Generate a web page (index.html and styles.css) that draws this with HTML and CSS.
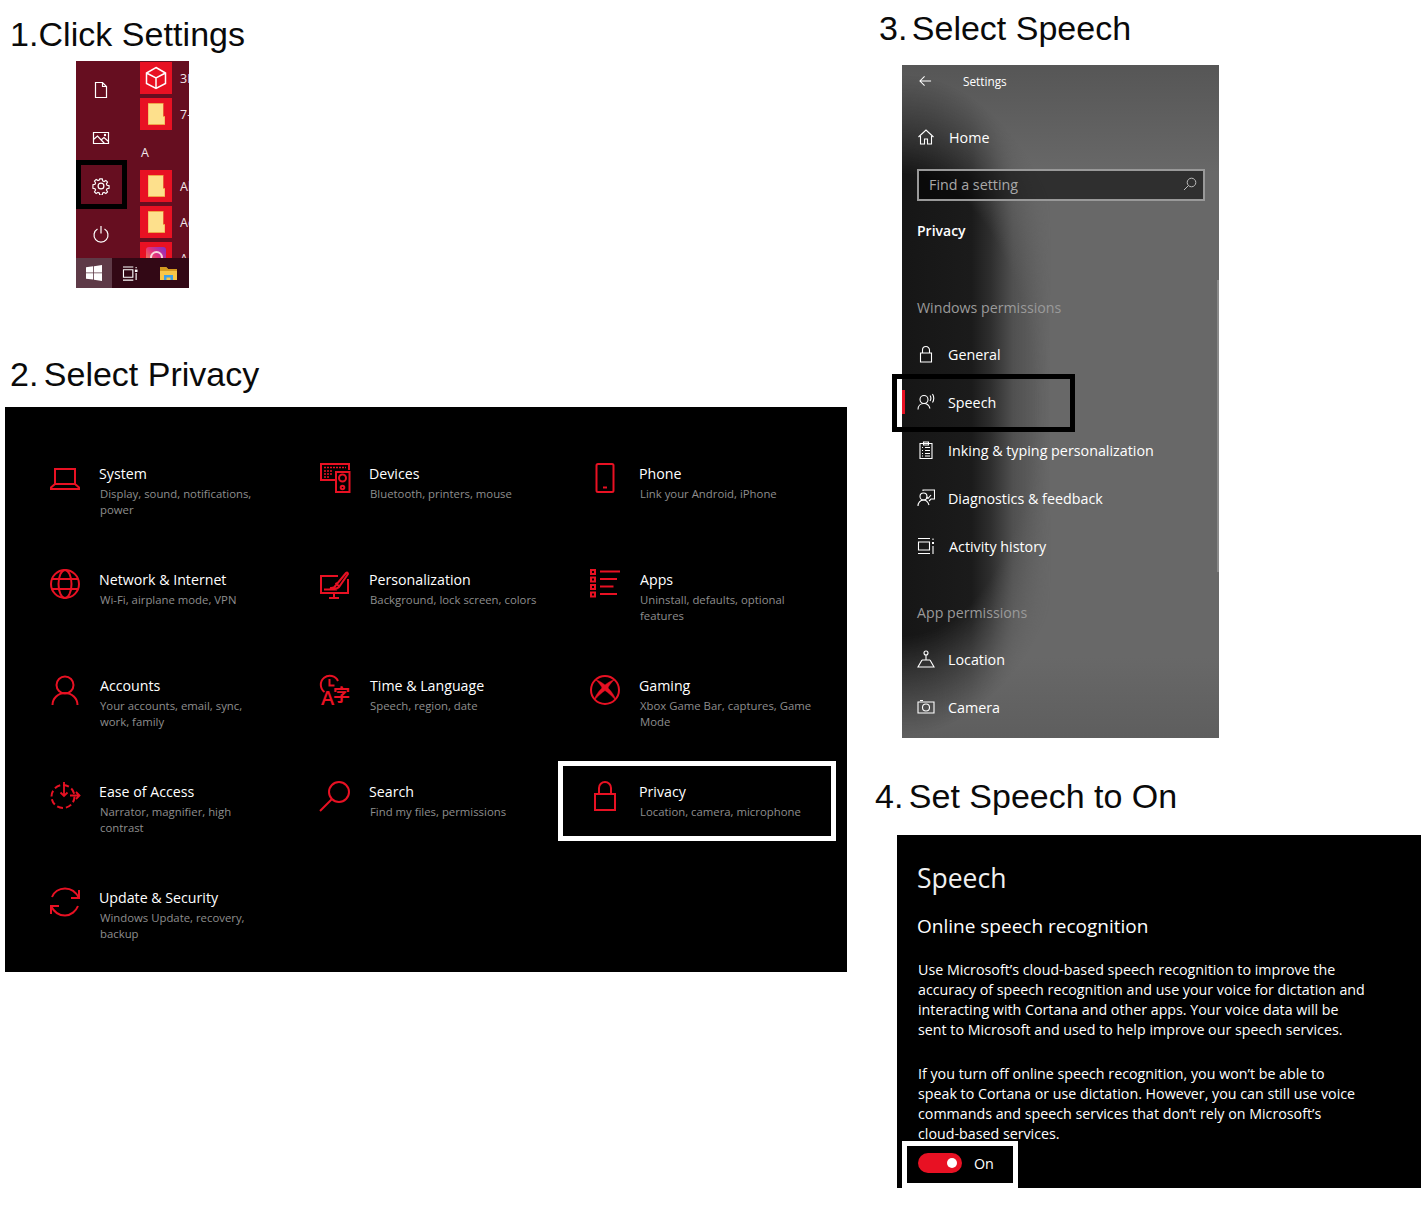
FILE: index.html
```html
<!DOCTYPE html>
<html lang="en">
<head>
<meta charset="utf-8">
<title>Turn on online speech recognition</title>
<link rel="stylesheet" href="styles.css">
</head>
<body>
<main class="page">
  <section class="col-left">
    <h2 class="step step-1">1.Click Settings</h2>
    <div class="start">
      <div class="start-body">
        <div class="start-rail">
          <div class="rail-btn"><svg class="rail-icon" viewBox="0 0 18 18"><path d="M3.500 1.500h7l4 4v11h-11zM10.500 1.500v4h4"/></svg></div>
          <div class="rail-btn"><svg class="rail-icon" viewBox="0 0 18 18"><path d="M1.500 3.500h15v11h-15zM1.500 10.500l4-3.500 7 7.500M9 11l3-2.500 4.500 4"/><circle cx="13" cy="6" r=".6"/></svg></div>
          <div class="rail-btn"><svg class="rail-icon" viewBox="0 0 18 18"><path d="M7.700 1.500h2.600l.5 2.200 1.400.6 1.900-1.200 1.800 1.800-1.200 1.900.6 1.400 2.200.5v2.600l-2.200.5-.6 1.400 1.200 1.900-1.800 1.800-1.900-1.200-1.400.6-.5 2.200H7.700l-.5-2.200-1.400-.6-1.900 1.200-1.800-1.800 1.200-1.900-.6-1.400-2.200-.5V7.700l2.200-.5.6-1.400-1.200-1.900 1.800-1.800 1.900 1.200 1.400-.6z" transform="translate(.45 .45) scale(.95)"/><circle cx="9" cy="9" r="2.900"/></svg></div>
          <div class="rail-btn"><svg class="rail-icon" viewBox="0 0 18 18"><path d="M5.500 4a7 7 0 1 0 7 0M9 1v7.500"/></svg></div>
        </div>
        <div class="start-list">
          <div class="app"><span class="tile"><svg class="tile-cube" viewBox="0 0 24 24"><path d="M12 1.500l9.500 5.500v10.500L12 22.500 2.500 17.500V7zM2.500 7l9.500 5 9.500-5M12 12v10.500"/></svg></span><span class="app-name">3D</span></div>
          <div class="app"><span class="tile"><svg class="folder" viewBox="0 0 17 22"><path class="folder-edge" d="M0 0h15.500v13H17v9H0z"/><path class="folder-page" d="M.5 1h14.500v13h1.500v7H.5z"/></svg></span><span class="app-name">7-</span></div>
          <div class="app-letter">A</div>
          <div class="app"><span class="tile"><svg class="folder" viewBox="0 0 17 22"><path class="folder-edge" d="M0 0h15.500v13H17v9H0z"/><path class="folder-page" d="M.5 1h14.500v13h1.500v7H.5z"/></svg></span><span class="app-name">Al</span></div>
          <div class="app"><span class="tile"><svg class="folder" viewBox="0 0 17 22"><path class="folder-edge" d="M0 0h15.500v13H17v9H0z"/><path class="folder-page" d="M.5 1h14.500v13h1.500v7H.5z"/></svg></span><span class="app-name">Ad</span></div>
          <div class="app"><span class="tile tile-top"><span class="insta"><span class="insta-ring"></span></span></span><span class="app-name">A</span></div>
        </div>
      </div>
      <div class="taskbar">
        <div class="task-start"><svg class="win-logo" viewBox="0 0 16 16"><path d="M0 2.300l7.200-1v6.200H0zM8 1.200L16 0v7.500H8zM0 8.300h7.200v6.300L0 13.700zM8 8.300h8V16l-8-1.200z"/></svg></div>
        <div class="task-view"><svg class="task-icon" viewBox="0 0 18 16"><path d="M1 1h11M1 15h11M1.500 4h10v8h-10zM15 1v1.500M15 7.500V15"/><rect x="13.700" y="3.800" width="2.800" height="2.600" class="task-dot"/></svg></div>
        <div class="task-files"><svg class="task-folder" viewBox="0 0 17 15"><path class="f-back" d="M0 1h6l2 2h9v11H0z"/><path class="f-top" d="M0 1h6l2 2h9v2H0z"/><path class="f-blue" d="M4 9h9v5h-2.500v-2.500h-4V14H4z"/></svg></div>
      </div>
      <div class="mark-dark mark-settings"></div>
    </div>

    <h2 class="step step-2"><span class="num num-2">2. </span>Select Privacy</h2>
    <div class="settings">
      <div class="tile-grid">
        <div class="item">
          <svg class="ic" viewBox="0 0 30 30"><path d="M5 6h20v15H5zM5 21l-4 3.500v1.500h28v-1.500L25 21"/></svg>
          <div class="item-text"><div class="item-title">System</div><div class="item-sub">Display, sound, notifications,<br>power</div></div>
        </div>
        <div class="item">
          <svg class="ic" viewBox="0 0 30 30"><path d="M15 17H1V1h28v6"/><path d="M16 9h13.500v20H16z"/><circle cx="22.500" cy="15" r="3.500"/><circle cx="22.500" cy="24.500" r="1.800"/><path class="ic-thin" d="M4 4.500h22M4 8h8M4 11h8M4 14h5" stroke-dasharray="2 1"/></svg>
          <div class="item-text"><div class="item-title">Devices</div><div class="item-sub">Bluetooth, printers, mouse</div></div>
        </div>
        <div class="item">
          <svg class="ic" viewBox="0 0 30 30"><rect x="6.500" y="1" width="17" height="28" rx="1.500"/><path d="M13 24.500h4"/></svg>
          <div class="item-text"><div class="item-title">Phone</div><div class="item-sub">Link your Android, iPhone</div></div>
        </div>
        <div class="item">
          <svg class="ic" viewBox="0 0 30 30"><circle cx="15" cy="15" r="14"/><ellipse cx="15" cy="15" rx="6.500" ry="14"/><path d="M2 10h26M2 20h26"/></svg>
          <div class="item-text"><div class="item-title">Network &amp; Internet</div><div class="item-sub">Wi-Fi, airplane mode, VPN</div></div>
        </div>
        <div class="item">
          <svg class="ic" viewBox="0 0 30 30"><path d="M18 7H1v17h27V10M14 24v5M9 29h10"/><path d="M10 19c3 .5 5-1 6-3l10-12c1-1 2-.5 2 1l-9 13c-2 2-6 2.500-9 1zM15.500 14l3.500 3M4 20.500h13"/></svg>
          <div class="item-text"><div class="item-title">Personalization</div><div class="item-sub">Background, lock screen, colors</div></div>
        </div>
        <div class="item">
          <svg class="ic" viewBox="0 0 30 30"><path d="M1 1h4v4H1zM1 8.500h4v4H1zM1 16h4v4H1zM1 23.500h4v4H1zM10 2.500h20M10 10h17M10 17.500h13.500M10 25h17"/></svg>
          <div class="item-text"><div class="item-title title-shift">Apps</div><div class="item-sub">Uninstall, defaults, optional<br>features</div></div>
        </div>
        <div class="item">
          <svg class="ic" viewBox="0 0 30 30"><circle cx="15" cy="10" r="8.500"/><path d="M2.500 30a12.500 12 0 0 1 25 0"/></svg>
          <div class="item-text"><div class="item-title title-shift">Accounts</div><div class="item-sub">Your accounts, email, sync,<br>work, family</div></div>
        </div>
        <div class="item">
          <svg class="ic" viewBox="0 0 30 30"><path d="M4.500 17A9 9 0 1 1 18 6M9.500 4v6.500h5"/><text x="1" y="30" class="ic-glyph">A</text><text x="13" y="26" class="ic-cjk">字</text></svg>
          <div class="item-text"><div class="item-title title-shift">Time &amp; Language</div><div class="item-sub">Speech, region, date</div></div>
        </div>
        <div class="item">
          <svg class="ic" viewBox="0 0 30 30"><circle cx="15" cy="15" r="14"/><path class="ic-fill" d="M6 5C9 5.500 12.500 8 15 10 17.500 8 21 5.500 24 5 21 8 18.500 11 18 13 21 16 25 21 25.500 25 22 21 18 17.500 15 15.500 12 17.500 8 21 4.500 25 5 21 9 16 12 13 11.500 11 9 8 6 5z"/></svg>
          <div class="item-text"><div class="item-title">Gaming</div><div class="item-sub">Xbox Game Bar, captures, Game<br>Mode</div></div>
        </div>
        <div class="item">
          <svg class="ic" viewBox="0 0 30 30"><circle class="ic-dash" cx="13" cy="15.500" r="11.500"/><path class="ic-arrow" d="M14 1v14M10.500 11.500l3.500 3.500 3.500-3.500M20 14.500h9.500M26 11l3.500 3.500-3.500 3.500"/></svg>
          <div class="item-text"><div class="item-title">Ease of Access</div><div class="item-sub">Narrator, magnifier, high<br>contrast</div></div>
        </div>
        <div class="item">
          <svg class="ic" viewBox="0 0 30 30"><circle cx="19" cy="11" r="10"/><path d="M12 18L0 30"/></svg>
          <div class="item-text"><div class="item-title">Search</div><div class="item-sub">Find my files, permissions</div></div>
        </div>
        <div class="item">
          <svg class="ic" viewBox="0 0 30 30"><path d="M5 13h20v16H5zM9 13V7a6 6 0 0 1 12 0v6"/></svg>
          <div class="item-text"><div class="item-title">Privacy</div><div class="item-sub">Location, camera, microphone</div></div>
        </div>
        <div class="item">
          <svg class="ic" viewBox="0 0 30 30"><path d="M2 10C4 5 9 1.500 15 1.500S26 5 29 11M29 3v8h-8M28 19c-2 5-7 9.500-13 9.500S4 25 1 19M1 27v-8h8"/></svg>
          <div class="item-text"><div class="item-title">Update &amp; Security</div><div class="item-sub">Windows Update, recovery,<br>backup</div></div>
        </div>
      </div>
      <div class="mark-light mark-privacy"></div>
    </div>
  </section>

  <section class="col-right">
    <h2 class="step step-3"><span class="num num-3">3. </span>Select Speech</h2>
    <div class="sidebar">
      <div class="side-head">
        <svg class="back" viewBox="0 0 14 12"><path d="M13 6H1M6 1L1 6l5 5"/></svg>
        <span class="side-name">Settings</span>
      </div>
      <div class="row row-home">
        <svg class="nav-ic" viewBox="0 0 18 18"><path d="M1.500 9L9 2l7.500 7M3.500 8v8h4v-5h3v5h4V8"/></svg>
        <span>Home</span>
      </div>
      <div class="find">
        <span class="find-text">Find a setting</span>
        <svg class="find-ic" viewBox="0 0 14 14"><circle cx="8.500" cy="5.500" r="4.300"/><path d="M5.500 8.500L1 13"/></svg>
      </div>
      <div class="side-title">Privacy</div>
      <div class="side-label label-win">Windows permissions</div>
      <div class="row">
        <svg class="nav-ic" viewBox="0 0 18 18"><path d="M3.500 8h11v9h-11zM5.500 8V5a3.500 3.500 0 0 1 7 0v3"/></svg>
        <span>General</span>
      </div>
      <div class="row row-active">
        <svg class="nav-ic" viewBox="0 0 18 18"><circle cx="7" cy="6.500" r="4"/><path d="M1 16.500c0-3.500 2.500-6 6-6s5 1.500 6 5M13 2.500c1 1.500 1 4 0 5.500M15.500 1c1.500 2.500 1.500 6 0 8.500"/></svg>
        <span>Speech</span>
      </div>
      <div class="row">
        <svg class="nav-ic" viewBox="0 0 18 18"><path d="M3 2.500h12v15H3zM6.500 1h5v3h-5zM5 6.500h1M8 6.500h5M5 9.500h1M8 9.500h5M5 12.500h1M8 12.500h5M5 15h1M8 15h5"/></svg>
        <span>Inking &amp; typing personalization</span>
      </div>
      <div class="row">
        <svg class="nav-ic" viewBox="0 0 18 18"><circle cx="6.500" cy="7.500" r="3.500"/><path d="M1 17c0-3 2-6 5.500-6s4.500 2 5.500 5M6 2V1h11.500v9H14l-2 2M9.500 8l1.500 1.500L14 6"/></svg>
        <span>Diagnostics &amp; feedback</span>
      </div>
      <div class="row row-activity">
        <svg class="nav-ic" viewBox="0 0 18 18"><path d="M1 1.500h12M1 16.500h12M1.500 5h11v8h-11zM16 1.500v1.500M16 9v8"/><rect x="15" y="5" width="2" height="2" class="nav-dot"/></svg>
        <span>Activity history</span>
      </div>
      <div class="side-label label-app">App permissions</div>
      <div class="row">
        <svg class="nav-ic" viewBox="0 0 18 18"><circle cx="9" cy="3" r="2"/><path d="M9 5v5M5 10h8M5 10L1 17h16l-4-7"/></svg>
        <span>Location</span>
      </div>
      <div class="row">
        <svg class="nav-ic" viewBox="0 0 18 18"><path d="M1 4h16v11H1zM3 2.500h3"/><circle cx="9" cy="9.500" r="3.500"/></svg>
        <span>Camera</span>
      </div>
      <div class="scroll"></div>
      <div class="mark-dark mark-speech"></div>
    </div>

    <h2 class="step step-4"><span class="num num-4">4. </span>Set Speech to On</h2>
    <div class="speech">
      <h3 class="speech-title">Speech</h3>
      <h4 class="speech-sub">Online speech recognition</h4>
      <p class="speech-p">Use Microsoft’s cloud-based speech recognition to improve the<br>accuracy of speech recognition and use your voice for dictation and<br>interacting with Cortana and other apps. Your voice data will be<br>sent to Microsoft and used to help improve our speech services.</p>
      <p class="speech-p speech-p2">If you turn off online speech recognition, you won’t be able to<br>speak to Cortana or use dictation. However, you can still use voice<br>commands and speech services that don’t rely on Microsoft’s<br>cloud-based services.</p>
      <div class="toggle-row">
        <span class="toggle"><span class="knob"></span></span>
        <span class="toggle-label">On</span>
      </div>
      <div class="mark-light mark-toggle"></div>
    </div>
  </section>
</main>
</body>
</html>
```

FILE: styles.css
```css
* { box-sizing: border-box; }
html, body { margin: 0; padding: 0; background: #fff; }
body { height: 1226px; overflow: hidden; font-family: "Open Sans", "Noto Sans", sans-serif; }
.page { display: flex; align-items: flex-start; }
.col-left { width: 875px; padding-top: 14px; flex: none; }
.col-right { width: 549px; padding-top: 8px; flex: none; }

.step { margin: 0; font: 400 34px/40px "Liberation Sans", Arial, sans-serif; height: 40px; color: #0a0a0a; white-space: nowrap; }
.step-1 { margin-left: 10px; letter-spacing: .05px; }
.step-2 { margin: 66px 0 0 10px; }
.step-3 { margin-left: 4px; }
.step-4 { margin: 38px 0 0 0; }
.num-2 { word-spacing: -4px; }
.num-3 { word-spacing: -5px; }
.num-4 { word-spacing: -4px; }

/* start menu */
.start { position: relative; width: 113px; height: 227px; margin: 7px 0 0 76px; background: #660e20; color: #fff; }
.start-body { display: flex; height: 197px; overflow: hidden; }
.start-rail { width: 64px; padding-top: 5px; flex: none; }
.rail-btn { height: 48px; width: 50px; display: flex; align-items: center; justify-content: center; }
.rail-icon { width: 18px; height: 18px; fill: none; stroke: #fff; stroke-width: 1.2; }
.start-list { width: 49px; overflow: hidden; padding-top: 1px; flex: none; }
.app { display: flex; align-items: center; height: 32px; margin-bottom: 4px; width: 60px; }
.tile { width: 32px; height: 32px; background: #e81123; display: flex; align-items: center; justify-content: center; flex: none; }
.tile-top { align-items: flex-start; }
.tile-cube { width: 24px; height: 24px; fill: none; stroke: #fff; stroke-width: 1.5; }
.folder { width: 17px; height: 22px; }
.folder-edge { fill: #f0a54a; }
.folder-page { fill: #fde08c; }
.insta { width: 20px; height: 20px; margin-top: 5px; border-radius: 3px; background: linear-gradient(45deg, #f6a13d, #e0307c 55%, #7a2fd0); display: flex; align-items: center; justify-content: center; }
.insta-ring { width: 13px; height: 13px; border-radius: 50%; border: 2px solid #f7d7dd; }
.app-name { font-size: 12.500px; margin-left: 8px; white-space: nowrap; color: #f2e8ea; }
.app-letter { height: 36px; line-height: 40px; font-size: 12.500px; color: #f2e8ea; margin-top: -1px; margin-bottom: 1px; padding-left: 1px; }
.taskbar { display: flex; height: 30px; background: #320815; }
.task-start { width: 36px; display: flex; align-items: center; justify-content: center; background: #5e3a47; }
.win-logo { width: 16px; height: 16px; fill: #fff; }
.task-view { width: 36px; display: flex; align-items: center; justify-content: center; }
.task-icon { width: 17px; height: 15px; fill: none; stroke: #fff; stroke-width: 1.2; }
.task-dot { fill: #fff; stroke: none; }
.task-files { width: 41px; display: flex; align-items: center; justify-content: center; }
.task-folder { width: 17px; height: 15px; }
.f-back { fill: #f7c648; }
.f-top { fill: #d59a20; }
.f-blue { fill: #3ea0e6; }

.mark-dark { position: absolute; border: 5px solid #000; }
.mark-light { position: absolute; border: 5px solid #fff; }
.mark-settings { left: 0; top: 99px; width: 51px; height: 49px; }

/* settings grid */
.settings { position: relative; width: 842px; height: 565px; margin: 13px 0 0 5px; background: #000; color: #fff; padding: 56px 0 0 45px; }
.tile-grid { display: grid; grid-template-columns: repeat(3, 270px); grid-auto-rows: 106px; }
.item { display: flex; gap: 19px; }
.ic { width: 30px; height: 30px; flex: none; fill: none; stroke: #e81123; stroke-width: 2; overflow: visible; }
.ic-thin { stroke-width: 1.5; }
.ic-fill { fill: #e81123; stroke: #e81123; stroke-width: .5; stroke-linejoin: round; }
.ic-dash { stroke-dasharray: 6 3; }
.ic-arrow { stroke-width: 1.800; }
.ic-glyph { font: 600 20px "Open Sans", sans-serif; fill: #e81123; stroke: none; }
.ic-cjk { font: 700 17px "Noto Sans CJK SC", sans-serif; fill: #e81123; stroke: none; }
.item-text { white-space: nowrap; padding-top: 1px; }
.item-title { font-size: 14.200px; line-height: 20px; color: #fff; }
.title-shift { padding-left: 1px; }
.item-sub { font-size: 11.350px; line-height: 16px; color: #8e8e8e; margin: 2px 0 0 1px; }
.mark-privacy { left: 553px; top: 354px; width: 278px; height: 80px; }

/* sidebar */
.sidebar { position: relative; isolation: isolate; width: 317px; height: 673px; margin: 17px 0 0 27px; color: #fff;
  background: linear-gradient(180deg, #565656 0, #686868 16%, #686868 88%, #5e5e5e 100%); }
.sidebar::before { content: ""; position: absolute; z-index: -1; inset: 0;
  background: linear-gradient(90deg, #161616 0, #1b1b1b 22%, #2e2e2e 28%, #505050 35%, rgba(104,104,104,0) 47%);
  -webkit-mask-image: radial-gradient(ellipse 190px 330px at 0 340px, #000 70%, transparent 100%);
  mask-image: radial-gradient(ellipse 190px 330px at 0 340px, #000 70%, transparent 100%); }
.side-head { height: 32px; display: flex; align-items: center; padding-left: 17px; }
.back { width: 13px; height: 12px; fill: none; stroke: #fff; stroke-width: 1.1; }
.side-name { font-size: 11.800px; margin-left: 31px; }
.row { position: relative; height: 48px; display: flex; align-items: center; padding-left: 15px; font-size: 14.300px; gap: 13px; }
.row-home { margin-top: 16px; gap: 14px; }
.row-activity { gap: 14px; }
.nav-ic { width: 18px; height: 18px; flex: none; fill: none; stroke: #fff; stroke-width: 1.1; }
.nav-dot { fill: #fff; stroke: none; }
.find { display: flex; align-items: center; justify-content: space-between; width: 288px; height: 32px; margin: 8px 0 0 15px; padding: 0 6px 2px 10px; border: 2px solid #999; background: rgba(0,0,0,.55); }
.find-text { font-size: 14.300px; color: #a8a8a8; }
.find-ic { width: 14px; height: 14px; fill: none; stroke: #bbb; stroke-width: 1; }
.side-title { margin: 20px 0 0 15px; height: 20px; line-height: 20px; font-size: 14px; font-weight: 600; }
.side-label { margin-left: 15px; height: 20px; line-height: 20px; font-size: 14.200px; color: #9a9a9a; margin-bottom: 12px; }
.label-win { margin-top: 57px; }
.label-app { margin-top: 33px; }
.row-active::before { content: ""; position: absolute; left: 0; top: 12px; width: 3px; height: 24px; background: #e81123; }
.scroll { position: absolute; right: 0; top: 215px; width: 2px; height: 292px; background: #8a8a8a; }
.mark-speech { left: -10px; top: 309px; width: 183px; height: 58px; }

/* speech */
.speech { position: relative; width: 524px; height: 353px; margin: 19px 0 0 22px; background: #000; color: #fff; padding: 23px 0 0 20px; }
.speech-title { margin: 0; font-size: 26.500px; line-height: 40px; font-weight: 400; color: #f0f0f0; }
.speech-sub { margin: 14px 0 0; font-size: 19px; line-height: 28px; font-weight: 400; }
.speech-p { margin: 20px 0 0 1px; font-size: 14.250px; line-height: 20px; white-space: nowrap; }
.speech-p2 { margin-top: 24px; }
.toggle-row { display: flex; align-items: center; gap: 12px; margin: 9px 0 0 1px; height: 20px; }
.toggle { width: 44px; height: 20px; border-radius: 10px; background: #e81123; display: flex; align-items: center; justify-content: flex-end; padding-right: 5px; }
.knob { width: 10px; height: 10px; border-radius: 50%; background: #fff; }
.toggle-label { font-size: 14.300px; }
.mark-toggle { left: 5px; top: 306px; width: 116px; height: 47px; }
```
